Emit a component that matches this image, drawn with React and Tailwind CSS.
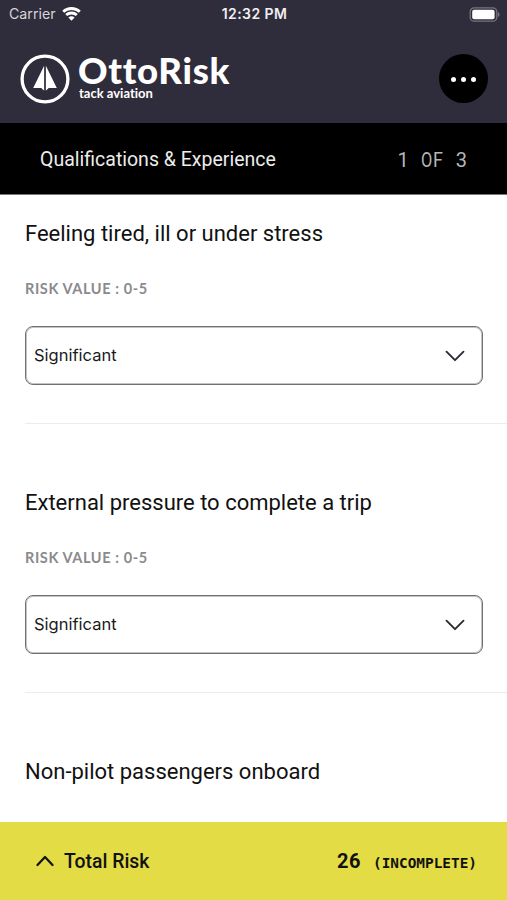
import React from 'react';

function StatusBar() {
  return (
    <div className="flex h-7 items-center justify-between pl-[9px] pr-[7px] text-[#f0f0f3]">
      <div className="flex w-[150px] items-center gap-[6px]">
        <span className="font-['Inter',sans-serif] text-[14.2px] leading-5 text-[#d5d5da]">Carrier</span>
        <svg width="19" height="15" viewBox="0 0 19 15" fill="none" stroke="#fff" strokeWidth="2.8">
          <path d="M1.2 4.8C5.8.4 13.2.4 17.8 4.8" />
          <path d="M4.2 8.1c3-2.8 7.6-2.8 10.6 0" />
          <path d="M9.5 13.7 6.4 10.5c1.7-1.6 4.5-1.6 6.2 0Z" fill="#fff" stroke="none" />
        </svg>
      </div>
      <span className="font-['Inter',sans-serif] text-[14px] font-semibold leading-5 tracking-[0.4px]">12:32 PM</span>
      <div className="flex w-[150px] justify-end">
        <svg width="31" height="15" viewBox="0 0 31 15">
          <rect x="1.2" y=".8" width="26.6" height="13.4" rx="4" fill="none" stroke="#77757f" strokeWidth="1.3" />
          <rect x="3.2" y="2.8" width="22.4" height="9.4" rx="2" fill="#fff" />
          <path d="M29 5v5c2-.7 2-4.3 0-5Z" fill="#77757f" />
        </svg>
      </div>
    </div>
  );
}

function Header() {
  return (
    <header className="h-[123px] bg-[#2f2d3b]">
      <StatusBar />
      <div className="flex justify-between pl-5 pr-[19px] pt-[26px]">
        <div className="flex">
          <svg width="50" height="50" viewBox="0 0 50 50">
            <circle cx="25" cy="25" r="22.9" fill="none" stroke="#fff" strokeWidth="3.3" />
            <path d="M24 12v24.500L21.2 34h-8Z" fill="#fff" />
            <path d="M26 12v24.500l2.800-2.500h8Z" fill="#fff" />
            <path d="M25 12v24.500" stroke="#65636c" strokeWidth="1" />
          </svg>
          <div className="flex flex-col pl-[8px] text-white">
            <span className="whitespace-nowrap font-['Lato',sans-serif] text-[36.5px] font-black leading-[33px] tracking-[0.7px] [font-variant-ligatures:none]">OttoRisk</span>
            <span className="whitespace-nowrap pl-px font-['Lato',sans-serif] text-[13px] font-bold leading-[12px] [font-variant-ligatures:none]">tack aviation</span>
          </div>
        </div>
        <button className="flex size-[49px] items-center justify-center gap-[5px] rounded-full bg-black pt-px">
          <span className="size-[5px] rounded-full bg-white" />
          <span className="size-[5px] rounded-full bg-white" />
          <span className="size-[5px] rounded-full bg-white" />
        </button>
      </div>
    </header>
  );
}

function SectionBar() {
  return (
    <div className="flex h-[72px] items-center justify-between border-b border-[#777] bg-black pl-10 pr-[40px] pt-[3px] font-['Roboto',sans-serif]">
      <span className="text-[19.5px] text-[#ececec]">Qualifications &amp; Experience</span>
      <span className="flex whitespace-pre text-[20px] text-[#b5b5b8]">
        <span className="w-[23.4px]">1 </span>
        <span className="w-[11.6px] origin-left scale-x-[.82]">O</span>
        <span className="w-[23.2px] origin-left scale-x-[.9]">F </span>
        <span>3</span>
      </span>
    </div>
  );
}

function RiskTitle({ children }) {
  return (
    <h2 className="pt-[24px] font-['Roboto',sans-serif] text-[22px] leading-[30px] text-[#111]">{children}</h2>
  );
}

function RiskItem({ title }) {
  return (
    <section className="ml-[25px] h-[269px]">
      <RiskTitle>{title}</RiskTitle>
      <p className="mt-[30px] font-['Lato',sans-serif] text-[14.5px] font-bold leading-5 tracking-[0.6px] text-[#8a8a8c]">RISK VALUE : 0-5</p>
      <div className="mr-[24px] mt-[27px] flex h-[59px] items-center justify-between rounded-[8px] border border-[#707072] pl-[8px] pr-[17px] shadow-[inset_0_0_0_1px_#c4c4c6]">
        <span className="font-['Inter',sans-serif] text-[16.5px] text-[#1a1a1a]">Significant</span>
        <svg width="20" height="12" viewBox="0 0 20 12" fill="none" stroke="#2c2b33" strokeWidth="1.9" strokeLinecap="round" strokeLinejoin="round">
          <path d="m1.5 1.7 8.5 8.5 8.5-8.5" />
        </svg>
      </div>
      <div className="mt-[38px] h-px bg-[#ececec]" />
    </section>
  );
}

function TotalBar() {
  return (
    <footer className="flex h-[78px] shrink-0 items-center justify-between bg-[#e3dc45] pl-[36px] pr-[30px] font-['Roboto',sans-serif] text-[#111]">
      <div className="flex items-center gap-[10px]">
        <svg width="18" height="12" viewBox="0 0 18 12" fill="none" stroke="#111" strokeWidth="2.2" strokeLinecap="round" strokeLinejoin="round">
          <path d="m1.5 10 7.5-8 7.5 8" />
        </svg>
        <span className="pt-[2px] text-[19.4px] font-medium">Total Risk</span>
      </div>
      <div className="flex items-baseline">
        <span className="text-[20px] font-bold tracking-[0.5px]">26</span>
        <span className="ml-[12px] font-['DejaVu_Sans_Mono',monospace] text-[14.4px] font-bold">(INCOMPLETE)</span>
      </div>
    </footer>
  );
}

export default function App() {
  return (
    <div className="flex h-[900px] w-[507px] flex-col overflow-hidden bg-white">
      <Header />
      <SectionBar />
      <main className="min-h-0 flex-1 overflow-hidden">
        <RiskItem title="Feeling tired, ill or under stress" />
        <RiskItem title="External pressure to complete a trip" />
        <section className="ml-[25px]">
          <RiskTitle>Non-pilot passengers onboard</RiskTitle>
        </section>
      </main>
      <TotalBar />
    </div>
  );
}
